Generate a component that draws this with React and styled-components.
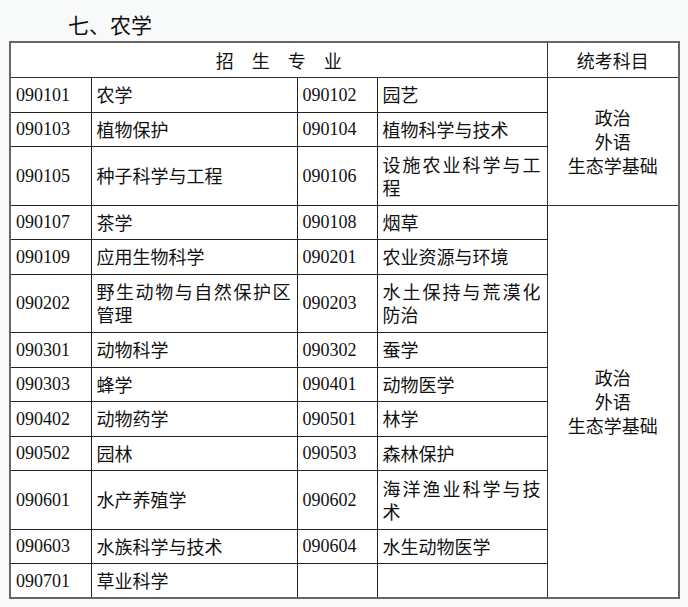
import React from "react";
import styled, { createGlobalStyle } from "styled-components";

const Global = createGlobalStyle`
  html, body { margin: 0; padding: 0; background: #f8f9f9; }
  body { font-family: "Noto Sans CJK SC", "Noto Sans", sans-serif; color: #111; }
`;

const Page = styled.div`
  width: 688px;
  height: 607px;
  box-sizing: border-box;
  padding: 10px 0 0 9px;
`;

const Title = styled.h2`
  margin: 0 0 3px 59px;
  font-size: 21px;
  font-weight: 400;
  line-height: 28px;
  color: #111;
`;

const Table = styled.table`
  border-collapse: collapse;
  table-layout: fixed;
  width: 669px;
  background: #fff;
  border: 2px solid #666;
`;

const Col = styled.col`
  width: ${(p) => p.$w}px;
`;

const HeadCell = styled.th`
  height: 34px;
  padding: 0;
  border: 1px solid #333;
  font-weight: 400;
  font-size: 18px;
  text-align: center;
  vertical-align: middle;
  line-height: 22px;
`;

const Row = styled.tr`
  height: ${(p) => (p.$tall ? 58.5 : 34.5)}px;
`;

const CodeCell = styled.td`
  padding: 0 0 0 5px;
  border: 1px solid #222;
  font-family: "Liberation Serif", "Times New Roman", "DejaVu Serif", serif;
  font-size: 18px;
  line-height: 22px;
  vertical-align: middle;
  color: #111;
`;

const NameCell = styled.td`
  padding: 0 6px 0 5px;
  border: 1px solid #222;
  font-size: 18px;
  line-height: 23px;
  vertical-align: middle;
  text-align: justify;
  text-justify: inter-character;
  word-break: break-all;
`;

const ExamCell = styled.td`
  padding: 0;
  border: 1px solid #333;
  font-size: 18px;
  line-height: 24px;
  text-align: center;
  vertical-align: middle;
`;

const group1 = [
  ["090101", "农学", "090102", "园艺"],
  ["090103", "植物保护", "090104", "植物科学与技术"],
  ["090105", "种子科学与工程", "090106", "设施农业科学与工程", true],
];

const group2 = [
  ["090107", "茶学", "090108", "烟草"],
  ["090109", "应用生物科学", "090201", "农业资源与环境"],
  ["090202", "野生动物与自然保护区管理", "090203", "水土保持与荒漠化防治", true],
  ["090301", "动物科学", "090302", "蚕学"],
  ["090303", "蜂学", "090401", "动物医学"],
  ["090402", "动物药学", "090501", "林学"],
  ["090502", "园林", "090503", "森林保护"],
  ["090601", "水产养殖学", "090602", "海洋渔业科学与技术", true],
  ["090603", "水族科学与技术", "090604", "水生动物医学"],
  ["090701", "草业科学", "", ""],
];

const Exam = ({ span }) => (
  <ExamCell rowSpan={span}>
    政治
    <br />
    外语
    <br />
    生态学基础
  </ExamCell>
);

const renderRows = (rows) =>
  rows.map(([c1, n1, c2, n2, tall], i) => (
    <Row key={c1} $tall={tall}>
      <CodeCell>{c1}</CodeCell>
      <NameCell>{n1}</NameCell>
      <CodeCell>{c2}</CodeCell>
      <NameCell>{n2}</NameCell>
      {i === 0 && <Exam span={rows.length} />}
    </Row>
  ));

export default function App() {
  return (
    <>
      <Global />
      <Page>
        <Title>七、农学</Title>
        <Table>
          <colgroup>
            <Col $w={81} />
            <Col $w={206} />
            <Col $w={80} />
            <Col $w={170} />
            <Col $w={132} />
          </colgroup>
          <thead>
            <tr>
              <HeadCell colSpan={4}>招　生　专　业</HeadCell>
              <HeadCell>统考科目</HeadCell>
            </tr>
          </thead>
          <tbody>
            {renderRows(group1)}
            {renderRows(group2)}
          </tbody>
        </Table>
      </Page>
    </>
  );
}
